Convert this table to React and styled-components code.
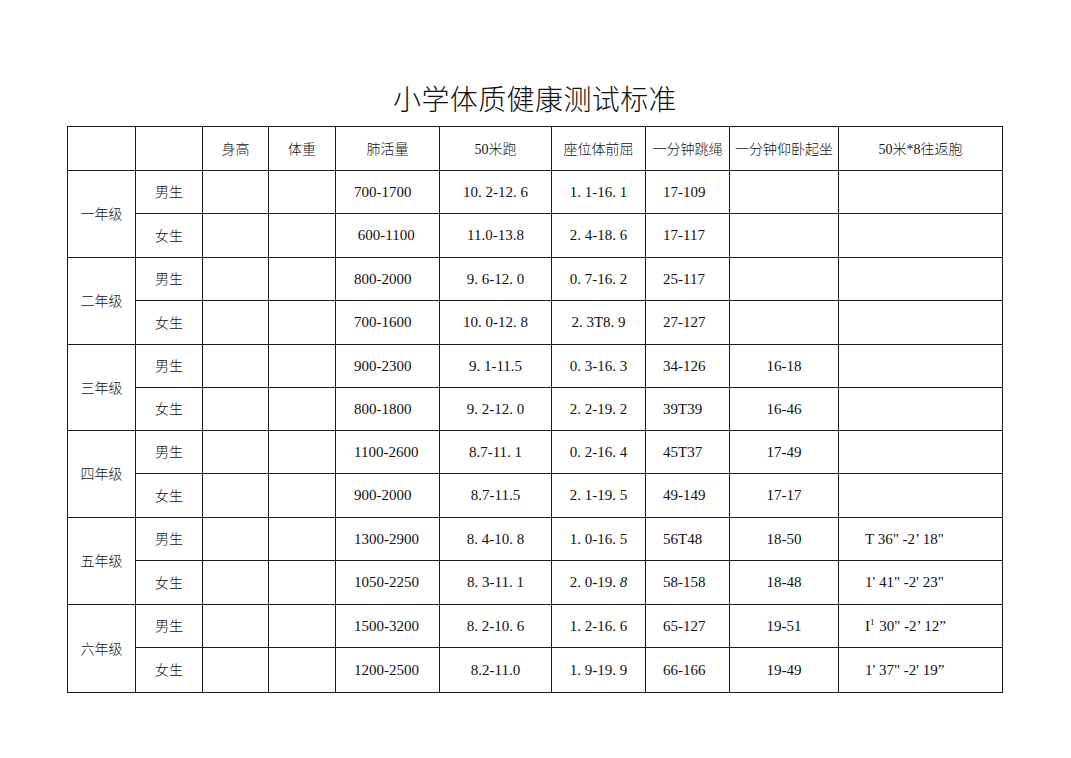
import * as React from 'react';
import styled, { createGlobalStyle } from 'styled-components';

const GlobalStyle = createGlobalStyle`
  html, body {
    margin: 0;
    padding: 0;
    background: #ffffff;
  }
  body {
    font-family: "Liberation Serif", "Noto Sans CJK SC", serif;
    color: #111;
  }
`;

const COLS = [68, 67, 66, 67, 104, 112, 94, 84, 109, 164];
const ROWS = [44, 43, 44, 43, 44, 43, 43, 43, 44, 43, 44, 43, 45];

const Page = styled.div`
  width: 1071px;
  height: 758px;
  padding: 83px 0 0 67px;
  box-sizing: border-box;
`;

const Title = styled.h1`
  width: 936px;
  margin: 0 0 13px;
  font-family: "Noto Sans CJK SC", sans-serif;
  font-size: 28px;
  font-weight: 300;
  line-height: 30px;
  text-align: center;
  letter-spacing: 0.4px;
`;

const Sheet = styled.div`
  display: grid;
  grid-template-columns: ${COLS.map((c) => `${c}px`).join(' ')};
  grid-template-rows: ${ROWS.map((r) => `${r}px`).join(' ')};
  width: 936px;
  box-sizing: border-box;
  border-top: 1px solid #1a1a1a;
  border-left: 1px solid #1a1a1a;
`;

const Cell = styled.div`
  display: flex;
  align-items: center;
  justify-content: ${({ $pad }) => ($pad ? 'flex-start' : 'center')};
  padding-left: ${({ $pad }) => ($pad ? `${$pad}px` : '0')};
  grid-row: ${({ $span }) => ($span ? `span ${$span}` : 'auto')};
  box-sizing: border-box;
  border-right: 1px solid #1a1a1a;
  border-bottom: 1px solid #1a1a1a;
  font-size: 15px;
  white-space: pre;
  overflow: hidden;
`;

const Han = styled.span`
  font-family: "Liberation Serif", "Noto Sans CJK SC", serif;
  font-size: 14px;
  font-weight: 300;
  position: relative;
  top: -1px;
`;

const Slant = styled.i`
  font-style: italic;
`;

const Sup = styled.span`
  font-size: 9px;
  position: relative;
  top: -4px;
  margin-right: 1px;
`;

const headers = ['', '', '身高', '体重', '肺活量', '50米跑', '座位体前屈', '一分钟跳绳', '一分钟仰卧起坐', '50米*8往返胞'];

const grades = [
  {
    name: '一年级',
    rows: [
      ['男生', '700-1700', '10. 2-12. 6', '1. 1-16. 1', '17-109', '', ''],
      ['女生', ' 600-1100', '11.0-13.8', '2. 4-18. 6', '17-117', '', ''],
    ],
  },
  {
    name: '二年级',
    rows: [
      ['男生', '800-2000', '9. 6-12. 0', '0. 7-16. 2', '25-117', '', ''],
      ['女生', '700-1600', '10. 0-12. 8', '2. 3T8. 9', '27-127', '', ''],
    ],
  },
  {
    name: '三年级',
    rows: [
      ['男生', '900-2300', '9. 1-11.5', '0. 3-16. 3', '34-126', '16-18', ''],
      ['女生', '800-1800', '9. 2-12. 0', '2. 2-19. 2', '39T39', '16-46', ''],
    ],
  },
  {
    name: '四年级',
    rows: [
      ['男生', '1100-2600', '8.7-11. 1', '0. 2-16. 4', '45T37', '17-49', ''],
      ['女生', '900-2000', '8.7-11.5', '2. 1-19. 5', '49-149', '17-17', ''],
    ],
  },
  {
    name: '五年级',
    rows: [
      ['男生', '1300-2900', '8. 4-10. 8', '1. 0-16. 5', '56T48', '18-50', 'T 36" -2’ 18"'],
      ['女生', '1050-2250', '8. 3-11. 1', <>2. 0-19. <Slant>8</Slant></>, '58-158', '18-48', '1\' 41" -2\' 23"'],
    ],
  },
  {
    name: '六年级',
    rows: [
      ['男生', '1500-3200', '8. 2-10. 6', '1. 2-16. 6', '65-127', '19-51', <>I<Sup>1</Sup> 30" -2’ 12”</>],
      ['女生', '1200-2500', '8.2-11.0', '1. 9-19. 9', '66-166', '19-49', '1\' 37" -2\' 19”'],
    ],
  },
];

const DataRow = ({ row }) => {
  const [sex, lung, run, reach, rope, situp, shuttle] = row;
  return (
    <>
      <Cell><Han>{sex}</Han></Cell>
      <Cell />
      <Cell />
      <Cell $pad={18}>{lung}</Cell>
      <Cell>{run}</Cell>
      <Cell>{reach}</Cell>
      <Cell $pad={17}>{rope}</Cell>
      <Cell>{situp}</Cell>
      <Cell $pad={26}>{shuttle}</Cell>
    </>
  );
};

const App = () => {
  return (
    <Page>
      <GlobalStyle />
      <Title>小学体质健康测试标准</Title>
      <Sheet>
        {headers.map((h, i) => (
          <Cell key={`h${i}`}><Han>{h}</Han></Cell>
        ))}
        {grades.map((g) => (
          <React.Fragment key={g.name}>
            <Cell $span={2}><Han>{g.name}</Han></Cell>
            <DataRow row={g.rows[0]} />
            <DataRow row={g.rows[1]} />
          </React.Fragment>
        ))}
      </Sheet>
    </Page>
  );
};

export default App;
